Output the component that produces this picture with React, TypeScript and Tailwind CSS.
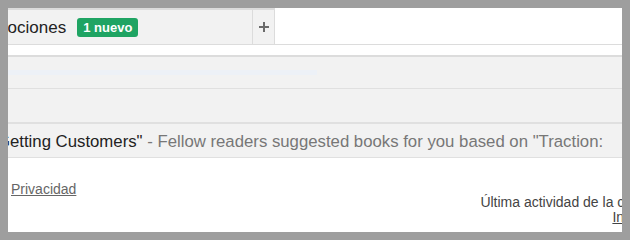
export default function App() {
  return (
    <div className="w-[630px] h-[240px] bg-[#9e9e9e] p-2 font-['Liberation_Sans',Arial,sans-serif]">
      <div className="w-[614px] h-[224px] bg-white overflow-hidden flex flex-col">
        {/* tab strip */}
        <div className="h-[37px] flex border-b border-[#dcdcdc] shrink-0">
          <div className="w-[245px] bg-[#f2f2f2] border-t-2 border-r border-[#dcdcdc] flex items-center overflow-hidden whitespace-nowrap">
            <span className="ml-[-41px] mt-[2px] text-[17px] text-[#222]">Promociones</span>
            <span className="ml-[11px] h-[19px] px-[6px] rounded-[3px] bg-[#1fa463] text-white text-[13px] font-bold leading-[19px]">
              1 nuevo
            </span>
          </div>
          <div className="w-[22px] bg-[#f2f2f2] border-t-2 border-r border-[#dcdcdc] flex items-center justify-center">
            <svg width="10" height="10" viewBox="0 0 10 10">
              <path d="M5 0v10M0 5h10" stroke="#6b6b6b" strokeWidth="2" />
            </svg>
          </div>
          <div className="flex-1" />
        </div>

        <div className="h-[10px] shrink-0" />

        {/* list rows */}
        <div className="border-t-2 border-[#dcdcdc] bg-[#f2f2f2] h-[33px] flex items-center shrink-0">
          <div className="w-[309px] h-[5px] bg-[#edf1f7]" />
        </div>
        <div className="border-t border-[#e0e0e0] bg-[#f2f2f2] h-[34px] shrink-0" />
        <div className="border-t-2 border-b border-[#e0e0e0] bg-[#f2f2f2] h-[36px] flex items-center overflow-hidden whitespace-nowrap shrink-0">
          <span className="ml-[-17px] mt-[3px] text-[16.75px]">
            <span className="text-[#222]">"Getting Customers"</span>
            <span className="text-[#777]"> - Fellow readers suggested books for you based on "Traction:</span>
          </span>
        </div>

        {/* footer */}
        <div className="flex-1 flex overflow-hidden whitespace-nowrap text-[14px]">
          <div className="pt-[21px] pl-[3px]">
            <a href="#" className="text-[#666] underline">Privacidad</a>
          </div>
          <div className="pt-[37px] leading-[15px] text-[#444]">
            <div className="ml-[404px]">Última actividad de la cuenta: hace 0 minutos</div>
            <div className="ml-[536px]">
              <a href="#" className="text-[#444] underline">Información detallada</a>
            </div>
          </div>
        </div>
      </div>
    </div>
  );
}
